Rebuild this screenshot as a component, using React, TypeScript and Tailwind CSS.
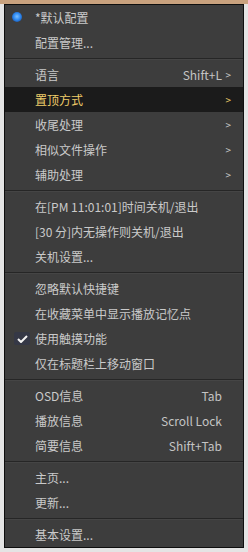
type Item =
  | { kind: "sep" }
  | {
      kind: "item";
      label: string;
      shortcut?: string;
      sub?: boolean;
      radio?: boolean;
      check?: boolean;
      active?: boolean;
    };

const items: Item[] = [
  { kind: "item", label: "*默认配置", radio: true },
  { kind: "item", label: "配置管理..." },
  { kind: "sep" },
  { kind: "item", label: "语言", shortcut: "Shift+L", sub: true },
  { kind: "item", label: "置顶方式", sub: true, active: true },
  { kind: "item", label: "收尾处理", sub: true },
  { kind: "item", label: "相似文件操作", sub: true },
  { kind: "item", label: "辅助处理", sub: true },
  { kind: "sep" },
  { kind: "item", label: "在[PM 11:01:01]时间关机/退出" },
  { kind: "item", label: "[30 分]内无操作则关机/退出" },
  { kind: "item", label: "关机设置..." },
  { kind: "sep" },
  { kind: "item", label: "忽略默认快捷键" },
  { kind: "item", label: "在收藏菜单中显示播放记忆点" },
  { kind: "item", label: "使用触摸功能", check: true },
  { kind: "item", label: "仅在标题栏上移动窗口" },
  { kind: "sep" },
  { kind: "item", label: "OSD信息", shortcut: "Tab" },
  { kind: "item", label: "播放信息", shortcut: "Scroll Lock" },
  { kind: "item", label: "简要信息", shortcut: "Shift+Tab" },
  { kind: "sep" },
  { kind: "item", label: "主页..." },
  { kind: "item", label: "更新..." },
  { kind: "sep" },
  { kind: "item", label: "基本设置..." },
];

const Separator = () => (
  <div className="pt-[3px] pb-[2px]">
    <div className="h-px bg-[#262626]" />
    <div className="h-px bg-[#454545]" />
  </div>
);

const MenuRow = ({ item }: { item: Extract<Item, { kind: "item" }> }) => (
  <div
    className={`relative flex h-[25px] items-center pl-[30px] pr-[12px] ${
      item.active ? "bg-[#1b1b1b] text-[#f0cd6a]" : "text-[#cacaca]"
    }`}
  >
    {item.radio && (
      <span className="absolute left-[7px] top-[7px] h-[10px] w-[10px] rounded-full bg-[radial-gradient(circle_at_50%_45%,#7cc0ff_0%,#2f8af2_45%,#1c55a6_80%,#2c3440_100%)]" />
    )}
    {item.check && (
      <span className="absolute left-[9px] top-[6px] flex h-[13px] w-[16px] items-center justify-center rounded-[2px] bg-[#353846]">
        <svg width="11" height="8" viewBox="0 0 11 8">
          <path d="M1 4 L4 7 L10 1" fill="none" stroke="#f4f4f4" strokeWidth="2" />
        </svg>
      </span>
    )}
    <span className="flex-1 whitespace-nowrap">{item.label}</span>
    {item.shortcut && <span className="whitespace-nowrap text-[#c4c4c4]">{item.shortcut}</span>}
    <span className="w-[9px] text-right text-[10px] leading-none">
      {item.sub ? ">" : ""}
    </span>
  </div>
);

export default function App() {
  return (
    <div className="h-[552px] w-[248px] bg-[linear-gradient(to_bottom,#c9a27e_0px,#c9a27e_4px,#e4e4e4_4px,#e4e4e4_100%)] pt-[4px] pl-[4px] font-['Noto_Sans_CJK_SC','Noto_Sans',sans-serif] text-[12px]">
      <div className="w-[240px] border border-[#0e0e0e] bg-[#3d3d3d]">
        {items.map((it, i) =>
          it.kind === "sep" ? <Separator key={i} /> : <MenuRow key={i} item={it} />
        )}
      </div>
    </div>
  );
}
